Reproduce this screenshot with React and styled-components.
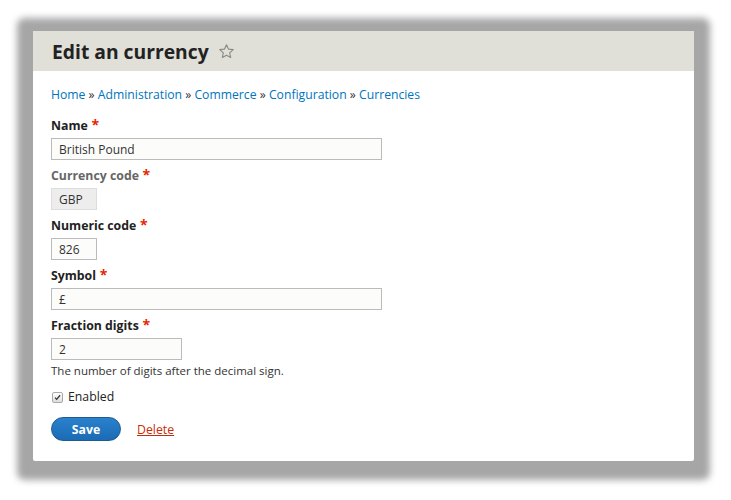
import styled, { createGlobalStyle } from 'styled-components';

const GlobalStyle = createGlobalStyle`
  html, body {
    margin: 0;
    padding: 0;
    background: #ffffff;
  }
  body {
    font-family: "Open Sans", "DejaVu Sans", sans-serif;
    color: #222;
  }
`;

const Stage = styled.div`
  width: 731px;
  height: 500px;
  padding: 31px 37px 39px 33px;
  box-sizing: border-box;
`;

const Window = styled.div`
  width: 661px;
  height: 430px;
  background: #fff;
  box-shadow: 0 3px 7px 16px #a6a6a6;
  border-radius: 2px;
  display: flex;
  flex-direction: column;
`;

const Header = styled.div`
  height: 40px;
  background: #e0dfd8;
  display: flex;
  align-items: center;
  padding: 0 19px;
  gap: 9px;
`;

const Title = styled.h1`
  margin: 0;
  font-size: 19.3px;
  font-weight: bold;
  color: #222;
`;

const Content = styled.div`
  padding: 16px 18px 0 18px;
  display: flex;
  flex-direction: column;
`;

const Breadcrumb = styled.nav`
  font-size: 12.2px;
  line-height: 16px;
  color: #333;
  margin-bottom: 14px;
  a {
    color: #0074bd;
    text-decoration: none;
  }
`;

const Field = styled.div`
  display: flex;
  flex-direction: column;
  align-items: flex-start;
  gap: 4px;
  margin-bottom: 7px;
`;

const Label = styled.label`
  font-size: 12.3px;
  line-height: 16px;
  font-weight: bold;
  color: ${p => (p.$disabled ? '#666' : '#222')};
  &::after {
    content: ' *';
    color: #e62600;
    font-size: 14px;
  }
`;

const Input = styled.div`
  box-sizing: border-box;
  width: ${p => p.$w}px;
  height: 22px;
  border: 1px solid ${p => (p.$disabled ? '#ddd' : '#bbb')};
  background: ${p => (p.$disabled ? '#ededed' : '#fcfcfa')};
  font-size: 12px;
  color: #333;
  display: flex;
  align-items: center;
  padding: 0 7px;
`;

const Description = styled.div`
  font-size: 11.5px;
  line-height: 15px;
  color: #333;
  margin-top: -1px;
`;

const CheckRow = styled.div`
  display: flex;
  align-items: center;
  gap: 5px;
  font-size: 12.3px;
  line-height: 16px;
  color: #222;
  margin: 4px 0 12px 1px;
`;

const CheckBox = styled.span`
  width: 9px;
  height: 9px;
  border: 1px solid #aaa;
  border-radius: 2px;
  background: linear-gradient(#fff, #ddd);
  display: flex;
  align-items: center;
  justify-content: center;
`;

const Actions = styled.div`
  display: flex;
  align-items: center;
  gap: 16px;
`;

const SaveButton = styled.button`
  width: 70px;
  height: 24px;
  border-radius: 12px;
  border: 1px solid #1e5c90;
  background: linear-gradient(#2a81cc, #1b6bb5);
  color: #fff;
  font-family: inherit;
  font-weight: bold;
  font-size: 12.3px;
  cursor: pointer;
`;

const DeleteLink = styled.a`
  font-size: 12.3px;
  color: #c72c0a;
  text-decoration: underline;
`;

const Star = () => (
  <svg width="17" height="17" viewBox="0 0 24 24" fill="none" stroke="#8b8b85" strokeWidth="1.6" strokeLinejoin="round">
    <path d="M12 2.5l2.9 6.2 6.6.7-5 4.5 1.4 6.6L12 17.2l-5.9 3.3 1.4-6.6-5-4.5 6.6-.7z" />
  </svg>
);

const fields = [
  { label: 'Name', value: 'British Pound', w: 331 },
  { label: 'Currency code', value: 'GBP', w: 46, disabled: true },
  { label: 'Numeric code', value: '826', w: 46 },
  { label: 'Symbol', value: '£', w: 331 },
  { label: 'Fraction digits', value: '2', w: 131, description: 'The number of digits after the decimal sign.' },
];

export default function App() {
  return (
    <>
      <GlobalStyle />
      <Stage>
        <Window>
          <Header>
            <Title>Edit an currency</Title>
            <Star />
          </Header>
          <Content>
            <Breadcrumb>
              <a href="#">Home</a> » <a href="#">Administration</a> » <a href="#">Commerce</a> »{' '}
              <a href="#">Configuration</a> » <a href="#">Currencies</a>
            </Breadcrumb>
            {fields.map(f => (
              <Field key={f.label}>
                <Label $disabled={f.disabled}>{f.label}</Label>
                <Input $w={f.w} $disabled={f.disabled}>{f.value}</Input>
                {f.description && <Description>{f.description}</Description>}
              </Field>
            ))}
            <CheckRow>
              <CheckBox>
                <svg width="7" height="7" viewBox="0 0 10 10">
                  <path d="M1.5 5.2l2.3 2.5L8.7 1.8" fill="none" stroke="#333" strokeWidth="1.8" />
                </svg>
              </CheckBox>
              Enabled
            </CheckRow>
            <Actions>
              <SaveButton>Save</SaveButton>
              <DeleteLink href="#">Delete</DeleteLink>
            </Actions>
          </Content>
        </Window>
      </Stage>
    </>
  );
}
